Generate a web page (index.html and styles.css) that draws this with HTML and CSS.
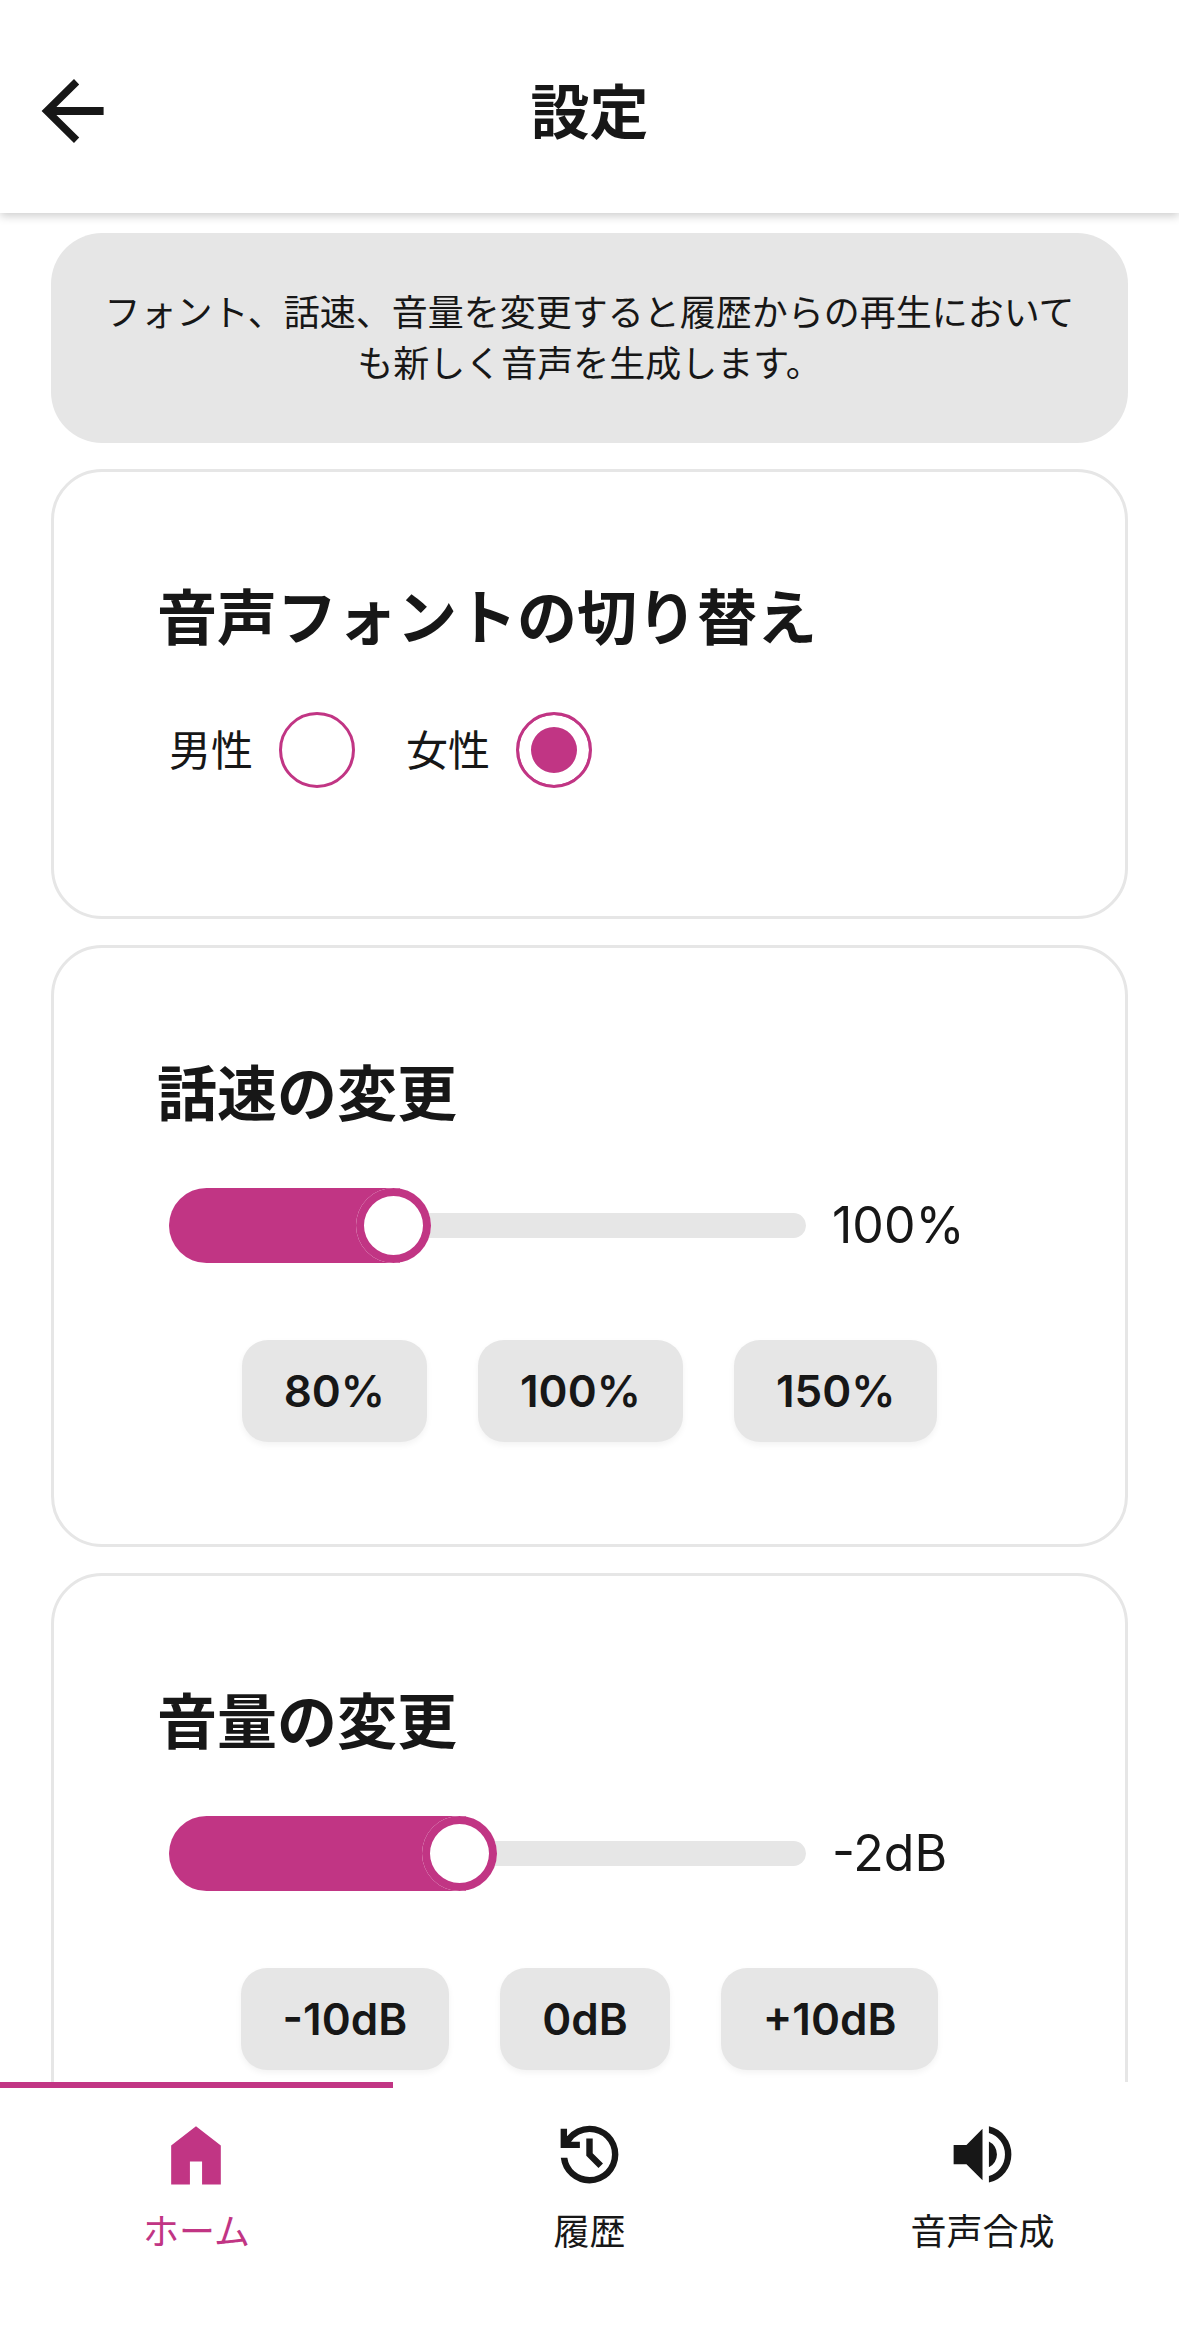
FILE: index.html
```html
<!doctype html>
<html lang="ja">
    <head>
        <meta charset="UTF-8" />
        <meta name="viewport" content="width=device-width, initial-scale=1.0" />
        <title>設定</title>
        <link rel="stylesheet" href="styles.css">
    </head>
    <body>
        <header class="navbar">
            <button class="back-button" type="button" aria-label="戻る">
                <svg viewBox="0 0 24 24"><path d="M12 20l-8.100-8 8.100-8 1.300 1.400L7.600 11H19.400v2H7.600l5.700 5.600z"/></svg>
            </button>
            <h1 class="navbar-title">設定</h1>
        </header>

        <main class="content">
            <p class="notice">フォント、話速、音量を変更すると履歴からの再生においても新しく音声を生成します。</p>

            <section class="card">
                <h2 class="card-title">音声フォントの切り替え</h2>
                <div class="control-row radio-row">
                    <label class="radio-label">男性 <input class="radio" type="radio" name="font" value="male"></label>
                    <label class="radio-label">女性 <input class="radio" type="radio" name="font" value="female" checked></label>
                </div>
            </section>

            <section class="card">
                <h2 class="card-title" id="speed-title">話速の変更</h2>
                <div class="control-row">
                    <input class="range" id="speed" type="range" min="50" max="200" value="100" aria-labelledby="speed-title">
                    <output class="range-value" for="speed">100%</output>
                </div>
                <div class="presets">
                    <button class="btn" type="button">80%</button>
                    <button class="btn" type="button">100%</button>
                    <button class="btn" type="button">150%</button>
                </div>
            </section>

            <section class="card">
                <h2 class="card-title" id="volume-title">音量の変更</h2>
                <div class="control-row">
                    <input class="range" id="volume" type="range" min="-20" max="20" value="-2" aria-labelledby="volume-title">
                    <output class="range-value" for="volume">-2dB</output>
                </div>
                <div class="presets">
                    <button class="btn" type="button">-10dB</button>
                    <button class="btn" type="button">0dB</button>
                    <button class="btn" type="button">+10dB</button>
                </div>
            </section>
        </main>

        <nav class="bottom-nav">
            <a class="nav-item active" href="#home">
                <svg viewBox="0 0 76 76"><path d="M13 67.500V29L37.500 10 62 29v38.500H43.500V45H31.500v22.500z"/></svg>
                <span>ホーム</span>
            </a>
            <a class="nav-item" href="#history">
                <svg viewBox="0 0 24 24"><path d="M12 21q-3.45 0-6.012-2.287T3.05 13H5.1q.35 2.6 2.313 4.3T12 19q2.925 0 4.963-2.037T19 12t-2.037-4.963T12 5q-1.725 0-3.225.8T6.25 8H9v2H3V4h2v2.35q1.275-1.6 3.113-2.475T12 3q1.875 0 3.513.713t2.85 1.924 1.925 2.85T21 12t-.712 3.513-1.925 2.85-2.85 1.925T12 21m2.8-4.8L11 12.4V7h2v4.6l3.2 3.2z"/></svg>
                <span>履歴</span>
            </a>
            <a class="nav-item" href="#speech">
                <svg viewBox="0 0 24 24"><path d="M14 20.725v-2.05q2.25-.65 3.625-2.5t1.375-4.2-1.375-4.2T14 5.275v-2.05q3.1.7 5.05 3.138T21 11.975t-1.95 5.613T14 20.725M3 15V9h4l5-5v16l-5-5zm11 1V7.95q1.175.55 1.838 1.65T16.5 12q0 1.275-.663 2.363T14 16"/></svg>
                <span>音声合成</span>
            </a>
        </nav>
    </body>
</html>
```
FILE: styles.css
```css
:root {
    --primary: #c13584;
    --base: #e6e6e6;
    --ink: #171717;
}
* {
    box-sizing: border-box;
    margin: 0;
}
body {
    display: flex;
    flex-direction: column;
    height: 100vh;
    font-family: Inter, "Noto Sans CJK JP", sans-serif;
    background: white;
    color: var(--ink);
}
svg {
    display: block;
    fill: currentColor;
}

/* header */
.navbar {
    display: grid;
    grid-template-columns: 1fr auto 1fr;
    align-items: center;
    padding: 60px 26px 51px;
    box-shadow: 0 3px 9px rgba(0, 0, 0, 0.2);
    z-index: 1;
}
.back-button {
    justify-self: start;
    padding: 3px 0;
    border: none;
    background: none;
    color: inherit;
    cursor: pointer;
}
.back-button svg {
    width: 96px;
    height: 96px;
}
.navbar-title {
    padding-top: 3px;
    font-size: 59px;
    line-height: 88px;
    font-weight: bold;
}

/* settings */
.content {
    flex: 1;
    min-height: 0;
    display: flex;
    flex-direction: column;
    gap: 26px;
    padding: 20px 51px;
    overflow-y: auto;
    scrollbar-width: none;
}
.notice {
    flex-shrink: 0;
    padding: 55px 51px 53px;
    border-radius: 51px;
    background: var(--base);
    font-size: 36px;
    line-height: 51px;
    text-align: center;
}
.card {
    flex-shrink: 0;
    padding: 102px 103px;
    border: 3px solid var(--base);
    border-radius: 51px;
}
.card-title {
    margin-bottom: 24px;
    font-size: 60px;
    line-height: 88px;
    font-weight: bold;
}
.control-row {
    display: flex;
    align-items: center;
    gap: 26px;
    padding: 26px 12px;
}
.radio-row {
    gap: 51px;
}
.radio-label {
    display: flex;
    align-items: center;
    gap: 26px;
    font-size: 42px;
    line-height: 51px;
}
.radio {
    appearance: none;
    width: 76px;
    height: 76px;
    margin: 0;
    border: 3px solid var(--primary);
    border-radius: 50%;
    background: white;
}
.radio:checked {
    background: var(--primary);
    box-shadow: inset 0 0 0 12px white;
}
.range {
    appearance: none;
    flex: 1;
    min-width: 0;
    height: 75px;
    margin: 0;
    border-radius: 38px;
    background: transparent;
    overflow: hidden;
    cursor: pointer;
}
.range::-webkit-slider-runnable-track {
    height: 25px;
    border-radius: 13px;
    background: var(--base);
}
/* the far offset shadow is the filled part, clipped by the input */
.range::-webkit-slider-thumb {
    appearance: none;
    width: 75px;
    height: 75px;
    margin-top: -25px;
    border-radius: 50%;
    background: white;
    box-shadow:
        inset 0 0 0 8px var(--primary),
        -1631px 0 0 1600px var(--primary);
}
.range-value {
    width: 178px;
    font-size: 50px;
    line-height: 75px;
}
.presets {
    display: flex;
    justify-content: center;
    gap: 51px;
    padding-top: 51px;
}
.btn {
    height: 102px;
    padding: 0 42px;
    border: none;
    border-radius: 26px;
    background: var(--base);
    box-shadow: 0 3px 6px rgba(0, 0, 0, 0.05);
    color: inherit;
    font-family: inherit;
    font-size: 44px;
    font-weight: 600;
    cursor: pointer;
}

/* bottom tabs */
.bottom-nav {
    display: flex;
    background: white;
}
.nav-item {
    flex: 1;
    display: flex;
    flex-direction: column;
    align-items: center;
    gap: 14px;
    padding: 28px 0 88px;
    border-top: 6px solid transparent;
    color: inherit;
    font-size: 36px;
    line-height: 51px;
    text-decoration: none;
}
.nav-item svg {
    width: 77px;
    height: 77px;
}
.nav-item.active {
    border-color: var(--primary);
    color: var(--primary);
}
```
